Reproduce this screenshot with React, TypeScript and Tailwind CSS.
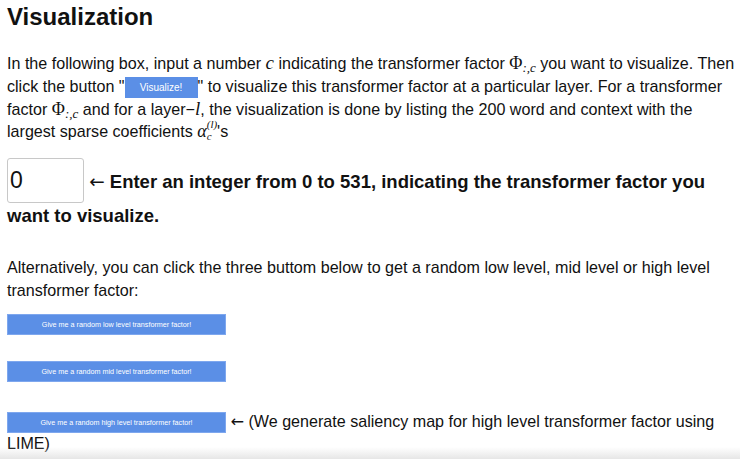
import React from "react";

const btn =
  "inline-block w-[219px] h-[21px] bg-[#5b8fe6] border border-[#7ea7ee] text-white text-[7.2px] leading-[19px] text-center font-['Liberation_Sans',Arial,sans-serif] align-middle";

function Phi() {
  return (
    <span className="font-['Liberation_Serif','Times_New_Roman',serif] text-[18px]">
      Φ<sub className="text-[13px] italic">:,c</sub>
    </span>
  );
}

function Arrow() {
  return <span className="font-['DejaVu_Sans',sans-serif] font-normal">←</span>;
}

export default function App() {
  return (
    <div className="relative w-[740px] h-[459px] overflow-hidden bg-white px-[7px] text-[#111] font-['Liberation_Sans',Arial,sans-serif]">
      <h1 className="pt-[4px] text-[24px] font-bold leading-[26px]">Visualization</h1>

      <p className="mt-[22px] whitespace-nowrap text-[16.1px] leading-[22.6px]">
        In the following box, input a number{" "}
        <i className="font-['Liberation_Serif',serif] text-[19px]">c</i> indicating the transformer factor <Phi /> you
        want to visualize. Then
        <br />
        click the button "
        <button className="inline-block w-[73px] h-[21px] bg-[#5b8fe6] text-white text-[10px] align-middle leading-[21px]">
          Visualize!
        </button>
        " to visualize this transformer factor at a particular layer. For a transformer
        <br />
        factor <Phi /> and for a layer&minus;<i className="font-['Liberation_Serif',serif] text-[19px]">l</i>, the
        visualization is done by listing the 200 word and context with the
        <br />
        largest sparse coefficients{" "}
        <span className="font-['Liberation_Serif',serif] italic text-[18px]">
          α
          <span className="inline-block h-[17px] align-[-3px] text-[11px] leading-[12px]">
            <span className="block -mt-[10px]">(l)</span>
            <span className="block">c</span>
          </span>
        </span>
        's
      </p>

      <div className="mt-[13px] leading-[25px] text-[18.5px] font-bold">
        <input
          defaultValue="0"
          className="inline-block w-[77px] h-[45px] border border-[#c8c8c8] rounded-[3px] px-[2px] text-[23px] font-normal align-baseline"
        />{" "}
        <Arrow /> Enter an integer from 0 to 531, indicating the transformer factor you
        <br />
        want to visualize.
      </div>

      <p className="mt-[28px] text-[16.1px] leading-[22.6px]">
        Alternatively, you can click the three buttom below to get a random low level, mid level or high level
        <br />
        transformer factor:
      </p>

      <div className="mt-[10px]">
        <button className={btn}>Give me a random low level transformer factor!</button>
      </div>
      <div className="mt-[23px]">
        <button className={btn}>Give me a random mid level transformer factor!</button>
      </div>
      <div className="mt-[28px] text-[16.1px] leading-[21px]">
        <button className={btn}>Give me a random high level transformer factor!</button> <Arrow /> (We generate
        saliency map for high level transformer factor using
        <br />
        LIME)
      </div>

      <div className="pointer-events-none absolute bottom-0 left-0 right-0 h-[12px] bg-gradient-to-b from-white/0 to-[#e6e6e6]" />
    </div>
  );
}
